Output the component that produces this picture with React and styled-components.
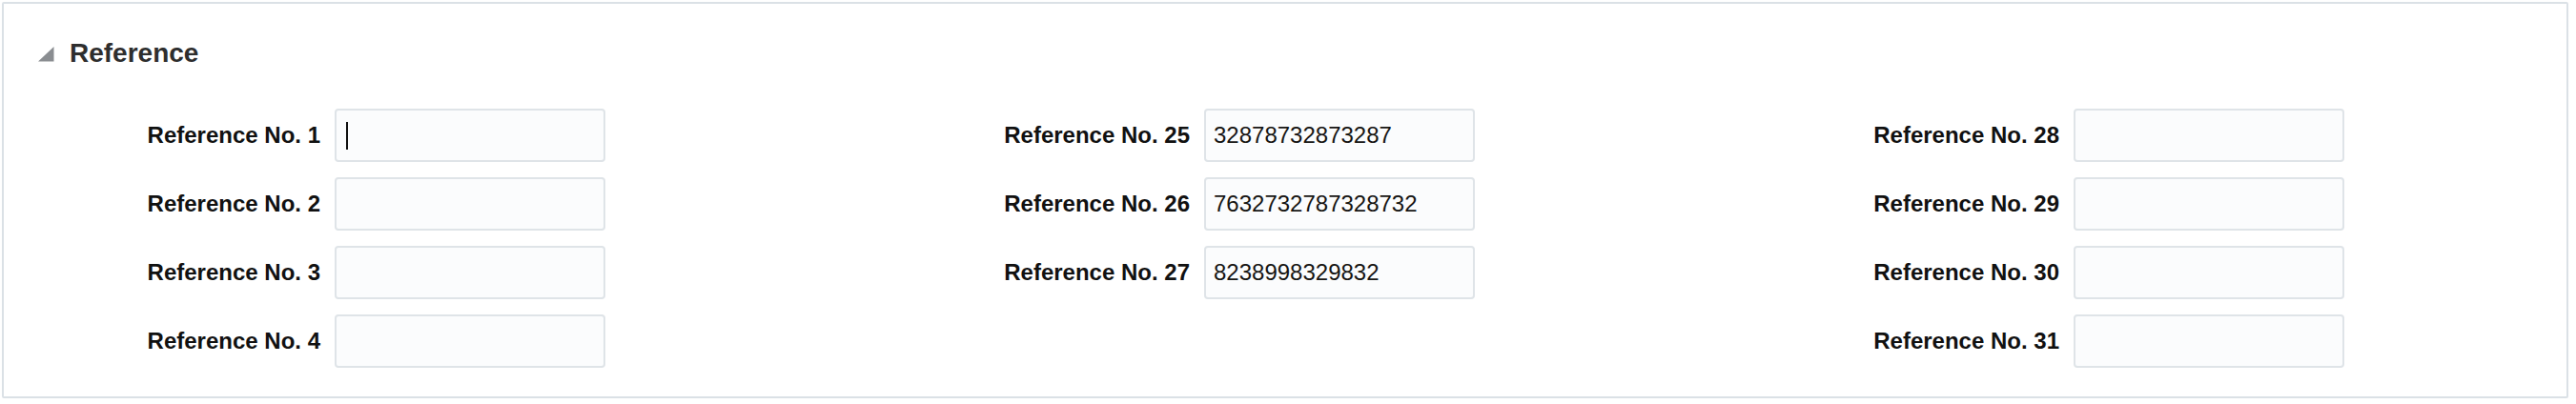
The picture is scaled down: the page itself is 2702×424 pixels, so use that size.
import React from 'react'
import styled, {createGlobalStyle} from 'styled-components'

const GlobalStyle = createGlobalStyle`
    html, body {
        margin: 0;
        padding: 0;
        background: #fff;
    }
    body {
        font-family: "Liberation Sans", Arial, Helvetica, sans-serif;
    }
`

const Panel = styled.section`
    box-sizing: border-box;
    margin: 2px 0 0 2px;
    width: 2692px;
    height: 416px;
    border: 2px solid #dbe1e6;
    border-radius: 2px;
    background: #fff;
`

const Header = styled.div`
    display: flex;
    align-items: center;
    height: 40px;
    padding: 32px 0 0 36px;
`

const Toggle = styled.svg`
    width: 17px;
    height: 16px;
    margin-right: 16px;
    margin-top: 2px;
`

const Title = styled.h2`
    margin: 0;
    font-size: 28px;
    font-weight: 700;
    color: #2e2e2e;
`

const Grid = styled.div`
    display: grid;
    grid-template-columns: 912px 912px 1fr;
    margin-top: 38px;
    padding-left: 132px;
`

const Column = styled.div`
    display: flex;
    flex-direction: column;
    gap: 16px;
`

const Row = styled.div`
    display: flex;
    align-items: center;
    gap: 15px;
`

const Label = styled.label`
    width: 200px;
    text-align: right;
    font-size: 24px;
    font-weight: 700;
    color: #111;
    white-space: nowrap;
`

const FieldBox = styled.div`
    box-sizing: border-box;
    display: flex;
    align-items: center;
    width: 284px;
    height: 56px;
    padding: 0 8px;
    border: 2px solid #dfe4e8;
    border-radius: 4px;
    background: #fbfcfd;
    font-size: 24px;
    color: #161513;
`

const Caret = styled.span`
    display: inline-block;
    width: 2px;
    height: 29px;
    margin-left: 2px;
    background: #111;
`

const columns = [
    [
        {label: 'Reference No. 1', value: '', focused: true},
        {label: 'Reference No. 2', value: ''},
        {label: 'Reference No. 3', value: ''},
        {label: 'Reference No. 4', value: ''},
    ],
    [
        {label: 'Reference No. 25', value: '32878732873287'},
        {label: 'Reference No. 26', value: '7632732787328732'},
        {label: 'Reference No. 27', value: '8238998329832'},
    ],
    [
        {label: 'Reference No. 28', value: ''},
        {label: 'Reference No. 29', value: ''},
        {label: 'Reference No. 30', value: ''},
        {label: 'Reference No. 31', value: ''},
    ],
]

export default function App() {
    return <>
        <GlobalStyle/>
        <Panel>
            <Header>
                <Toggle viewBox="0 0 17 16">
                    <polygon points="0,15.5 16.5,15.5 16.5,0" fill="#8a8d91"/>
                </Toggle>
                <Title>Reference</Title>
            </Header>
            <Grid>
                {columns.map((col, i) => <Column key={i}>
                    {col.map((f) => <Row key={f.label}>
                        <Label>{f.label}</Label>
                        <FieldBox>
                            {f.focused ? <Caret/> : f.value}
                        </FieldBox>
                    </Row>)}
                </Column>)}
            </Grid>
        </Panel>
    </>
}
